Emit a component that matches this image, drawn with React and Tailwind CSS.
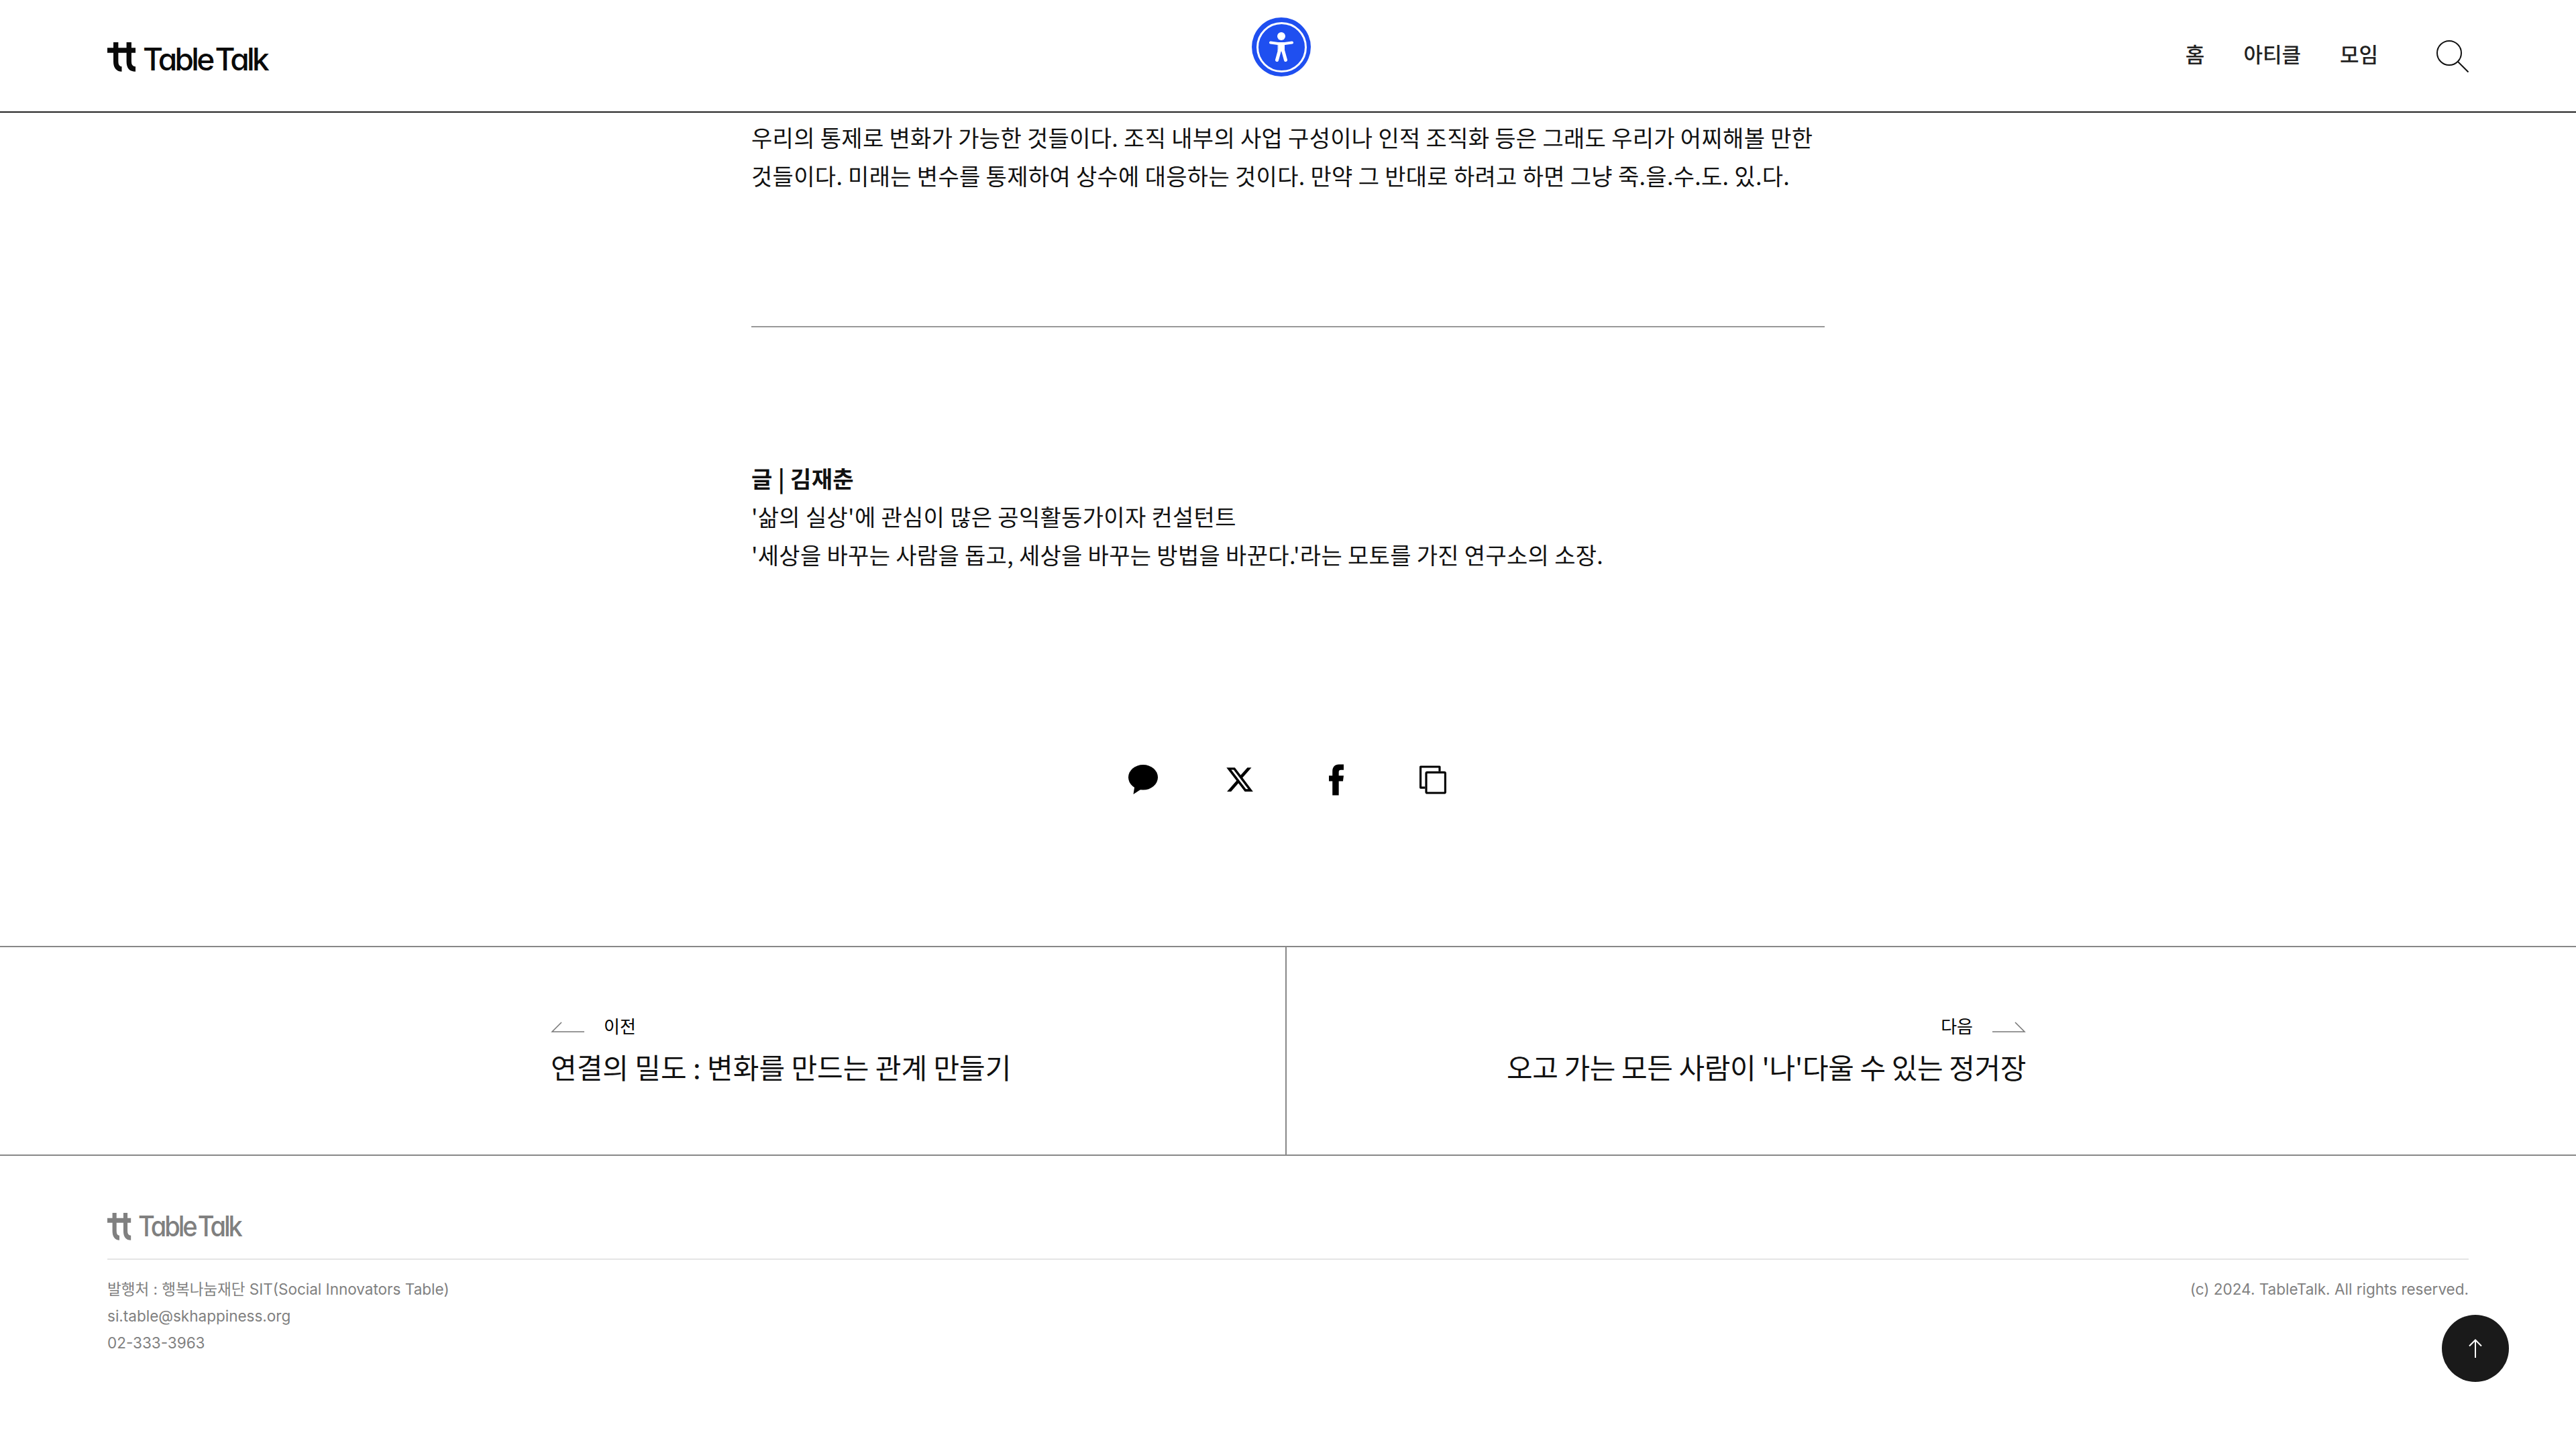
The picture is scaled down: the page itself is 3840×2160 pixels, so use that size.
const SANS = "font-['Inter','Noto_Sans_CJK_KR',sans-serif]";
const BODY = "font-['Noto_Sans_CJK_KR',sans-serif]";

function Logo({ muted }) {
  const color = muted ? "#808080" : "#0a0a0a";
  return (
    <div className="flex items-end gap-[10px]" style={{ color }}>
      <svg viewBox="0 0 44 44" preserveAspectRatio="none" className={muted ? "h-[41px] w-[36px] -translate-y-[3px]" : "h-[44px] w-[43px]"} fill="none" stroke="currentColor" strokeWidth="7.5">
        <path d="M0 12H43M13 0V29C13 36 16 40 22 40M33 0V29C33 36 36 40 43 40" />
      </svg>
      <span
        className={`${SANS} origin-bottom font-medium leading-[0.74] tracking-[-0.08em] [font-feature-settings:'cv11'] [word-spacing:-0.1em] ${
          muted ? "-translate-y-[9px] scale-y-[1.1] text-[38px]" : "-translate-y-[1px] text-[46px]"
        }`}
      >
        Table Talk
      </span>
    </div>
  );
}

function Header() {
  return (
    <header className="relative flex h-[168px] items-center justify-between border-b-2 border-[#222] px-[160px] pt-[3px]">
      <Logo />
      <div className="absolute left-[1866px] top-[26px] flex h-[88px] w-[88px] items-center justify-center rounded-full bg-[#1f4ff0]">
        <div className="flex h-[75px] w-[75px] items-center justify-center rounded-full border-[3px] border-white">
          <svg viewBox="0 0 36 44" className="h-[44px] w-[36px]" fill="white" stroke="white" strokeLinecap="round" strokeLinejoin="round">
            <circle cx="18" cy="6" r="6" stroke="none" />
            <path d="M2 15.500L13 17H23L34 15.500" fill="none" strokeWidth="4" />
            <path d="M13.500 17H22.500V28H13.500Z" strokeWidth="1" />
            <path d="M15.500 27L11.500 41.500M20.500 27L24.500 41.500" fill="none" strokeWidth="5" />
          </svg>
        </div>
      </div>
      <nav className={`${SANS} flex -translate-y-[2px] items-center text-[31px] font-medium text-[#222]`}>
        <a className="mr-[58px]">홈</a>
        <a className="mr-[58px]">아티클</a>
        <a className="mr-[87px]">모임</a>
        <svg viewBox="0 0 48 48" className="h-[48px] w-[48px] translate-y-[1px]" fill="none" stroke="#111" strokeWidth="2">
          <circle cx="19" cy="19" r="18" />
          <path d="M32 32L47.500 47.500" />
        </svg>
      </nav>
    </header>
  );
}

function Article() {
  return (
    <main className={`${BODY} mx-auto w-[1600px] text-[34px] leading-[57px] tracking-[0.32px] text-[#111]`}>
      <p className="pt-[8px]">
        우리의 통제로 변화가 가능한 것들이다. 조직 내부의 사업 구성이나 인적 조직화 등은 그래도 우리가 어찌해볼 만한
        <br />
        것들이다. 미래는 변수를 통제하여 상수에 대응하는 것이다. 만약 그 반대로 하려고 하면 그냥 죽.을.수.도. 있.다.
      </p>
      <hr className="mt-[196px] border-t-2 border-[#999]" />
      <div className="mt-[196px]">
        <p className="font-bold">글 | 김재춘</p>
        <p>'삶의 실상'에 관심이 많은 공익활동가이자 컨설턴트</p>
        <p>'세상을 바꾸는 사람을 돕고, 세상을 바꾸는 방법을 바꾼다.'라는 모토를 가진 연구소의 소장.</p>
      </div>
    </main>
  );
}

function ShareBar() {
  return (
    <div className="mt-[282px] flex h-[50px] items-center justify-center text-black">
      <div className="flex w-[144px] justify-center">
        <svg viewBox="0 0 41 41" className="h-[44px] w-[44px]" fill="currentColor">
          <ellipse cx="20.500" cy="17.500" rx="20.500" ry="17.500" />
          <path d="M9 28L7 41L19 33Z" />
        </svg>
      </div>
      <div className="flex w-[144px] justify-center">
        <svg viewBox="0 0 24 24" className="h-[44px] w-[44px]" fill="currentColor">
          <path d="M18.244 2.25h3.308l-7.227 8.26 8.502 11.24H16.17l-5.214-6.817L4.99 21.75H1.68l7.73-8.835L1.254 2.25H8.08l4.713 6.231zm-1.161 17.52h1.833L7.084 4.126H5.117z" />
        </svg>
      </div>
      <div className="flex w-[144px] justify-center">
        <svg viewBox="0 0 21 44" className="h-[47px] w-[22px]" fill="currentColor">
          <path d="M5 44V24H0V16H5V10C5 3.500 8.500 0 14 0H21V8H17C15 8 14 9 14 11V16H21L20 24H14V44Z" />
        </svg>
      </div>
      <div className="flex w-[144px] justify-center">
        <svg viewBox="0 0 38 40" className="h-[43px] w-[40px]" fill="none" stroke="currentColor" strokeWidth="3" strokeLinejoin="round">
          <path d="M8 31H1.500V1.500H28.500V8" />
          <rect x="9.500" y="9.500" width="27" height="29" rx="1.500" />
        </svg>
      </div>
    </div>
  );
}

function PrevNext() {
  return (
    <div className="mt-[223px] grid h-[313px] grid-cols-[1918px_1fr] border-y-2 border-[#888]">
      <a className="flex flex-col items-start justify-center border-r-2 border-[#888] pl-[821px]">
        <span className={`${SANS} flex items-center text-[26px] leading-[40px]`}>
          <svg viewBox="0 0 50 16" className="mr-[29px] h-[16px] w-[50px]" fill="none" stroke="#777" strokeWidth="1.500">
            <path d="M50 15H2L16 1" />
          </svg>
          이전
        </span>
        <span className={`${BODY} mt-[6px] text-[42px] leading-[66px] text-[#111]`}>연결의 밀도 : 변화를 만드는 관계 만들기</span>
      </a>
      <a className="flex flex-col items-end justify-center pr-[820px]">
        <span className={`${SANS} flex items-center text-[26px] leading-[40px]`}>
          다음
          <svg viewBox="0 0 50 16" className="ml-[29px] h-[16px] w-[50px]" fill="none" stroke="#777" strokeWidth="1.500">
            <path d="M0 15H48L34 1" />
          </svg>
        </span>
        <span className={`${BODY} mt-[6px] text-[42px] leading-[66px] tracking-[-0.4px] text-[#111]`}>오고 가는 모든 사람이 '나'다울 수 있는 정거장</span>
      </a>
    </div>
  );
}

function Footer() {
  return (
    <footer className={`${SANS} px-[160px] pt-[88px] text-[22.5px] leading-[40px] text-[#808080]`}>
      <div className="border-b-2 border-[#e5e5e5] pb-[24px]">
        <Logo muted />
      </div>
      <div className="flex justify-between pt-[24px]">
        <div>
          <p>발행처 : 행복나눔재단 SIT(Social Innovators Table)</p>
          <p>si.table@skhappiness.org</p>
          <p>02-333-3963</p>
        </div>
        <p>(c) 2024. TableTalk. All rights reserved.</p>
      </div>
    </footer>
  );
}

export default function App() {
  return (
    <div className="relative h-[2160px] w-[3840px] overflow-hidden bg-white">
      <Header />
      <Article />
      <ShareBar />
      <PrevNext />
      <Footer />
      <button className="absolute left-[3640px] top-[1960px] flex h-[100px] w-[100px] items-center justify-center rounded-full bg-[#1a1a1a]">
        <svg viewBox="0 0 20 28" className="h-[28px] w-[20px]" fill="none" stroke="white" strokeWidth="2">
          <path d="M10 28V1.500M1 10.500L10 1.500L19 10.500" />
        </svg>
      </button>
    </div>
  );
}
